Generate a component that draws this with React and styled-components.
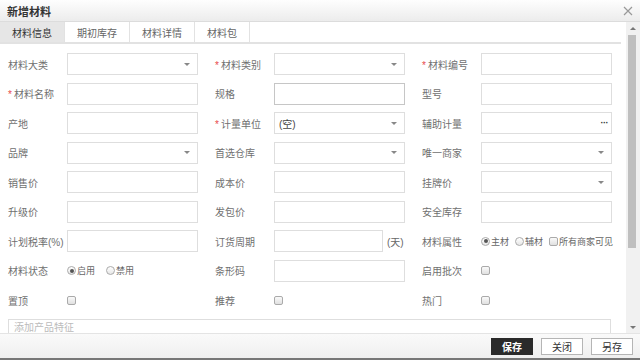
import styled, { createGlobalStyle } from "styled-components";

const GlobalStyle = createGlobalStyle`
    html, body {
        margin:0;
        padding:0;
        background:#fff;
    }
    body {
        font-family:"Liberation Sans","Noto Sans CJK SC",sans-serif;
        font-size:10px;
        color:#555;
    }
`;

const Dialog = styled.div`
    width:640px;
    height:360px;
    display:flex;
    flex-direction:column;
    overflow:hidden;
    background:#fff;
`;
const Header = styled.div`
    height:21px;
    flex:none;
    display:flex;
    align-items:center;
    justify-content:space-between;
    padding:0 7px;
    background:linear-gradient(#fefefe,#ececec);
    border-bottom:1px solid #dcdcdc;
    h1{
        margin:0;
        font-size:11px;
        font-weight:bold;
        color:#333;
    }
`;
const CloseBtn = styled.span`
    width:10px;
    height:10px;
    display:flex;
    color:#999;
`;
const Body = styled.div`
    flex:1;
    display:flex;
    min-height:0;
`;
const Content = styled.div`
    flex:1;
    overflow:hidden;
    padding-right:5px;
`;
const ScrollBar = styled.div`
    width:14px;
    flex:none;
    display:flex;
    flex-direction:column;
    background:#f1f1f1;
`;
const ScrollBtn = styled.div`
    height:12px;
    flex:none;
    display:flex;
    align-items:center;
    justify-content:center;
    &::after{
        content:"";
        border-left:3px solid transparent;
        border-right:3px solid transparent;
        ${p => p.$down ? 'border-top:3px solid #777;' : 'border-bottom:3px solid #777;'}
    }
`;
const Track = styled.div`
    flex:1;
    padding:1px 4px 0 2px;
`;
const Thumb = styled.div`
    height:213px;
    background:#bfbfbf;
`;
const TabBar = styled.div`
    display:flex;
    height:20px;
    border-bottom:2px solid #e2e2e2;
`;
const Tab = styled.div`
    padding:0 12px;
    display:flex;
    align-items:center;
    font-size:10px;
    color:${p => p.$active ? '#333' : '#666'};
    background:${p => p.$active ? '#e6e6e6' : '#fff'};
    border-right:1px solid #e2e2e2;
`;
const Form = styled.div`
    display:grid;
    grid-template-columns:repeat(3,190px);
    column-gap:17px;
    row-gap:7.5px;
    grid-auto-rows:22px;
    padding:9px 0 0 8px;
`;
const Field = styled.div`
    display:grid;
    grid-template-columns:59px 1fr;
    align-items:center;
`;
const Label = styled.label`
    font-size:10px;
    color:#707070;
    white-space:nowrap;
    i{
        color:#e84a4a;
        font-style:normal;
        margin-right:2px;
    }
`;
const Input = styled.div`
    height:22px;
    box-sizing:border-box;
    width:${p => p.$w || '100%'};
    border:1px solid ${p => p.$dark ? '#c6c6c6' : '#dedede'};
    background:#fff;
    display:flex;
    align-items:center;
    padding:0 4px;
    font-size:10px;
    color:#444;
`;
const Arrow = styled.span`
    margin-left:auto;
    margin-right:3px;
    width:0;
    height:0;
    border-left:3px solid transparent;
    border-right:3px solid transparent;
    border-top:3px solid #888;
`;
const Dots = styled.span`
    margin-left:auto;
    margin-right:-1px;
    font-size:9px;
    font-weight:bold;
    color:#333;
    letter-spacing:-0.5px;
    line-height:1;
`;
const Inline = styled.div`
    display:flex;
    align-items:center;
    gap:${p => p.$gap || 4}px;
`;
const Unit = styled.span`
    color:#666;
    font-size:10px;
`;
const Choice = styled.span`
    display:flex;
    align-items:center;
    font-size:9px;
    color:#666;
    white-space:nowrap;
`;
const Radio = styled.span`
    width:7px;
    height:7px;
    border:1px solid #aaa;
    border-radius:50%;
    background:linear-gradient(#fff,#e6e6e6);
    margin-right:1px;
    display:flex;
    align-items:center;
    justify-content:center;
    &::after{
        content:"";
        width:4px;
        height:4px;
        border-radius:50%;
        background:${p => p.$on ? '#555' : 'transparent'};
    }
`;
const Check = styled.span`
    width:7px;
    height:7px;
    border:1px solid #aaa;
    border-radius:2px;
    background:linear-gradient(#fafafa,#e0e0e0);
    margin-right:1px;
`;
const Features = styled.div`
    margin:8px 0 24px 8px;
    width:603px;
    height:96px;
    box-sizing:border-box;
    border:1px solid #dedede;
    padding:2px 5px;
    font-size:10px;
    line-height:12px;
    color:#bbb;
`;
const Footer = styled.div`
    height:24px;
    flex:none;
    display:flex;
    align-items:center;
    justify-content:flex-end;
    gap:8px;
    padding:0 7px 0 0;
    border-top:1px solid #e4e4e4;
    border-bottom:2px solid #777;
    background:linear-gradient(#fafafa,#efefef);
`;
const Button = styled.button`
    width:42px;
    height:17px;
    padding:0;
    font-family:inherit;
    font-size:10px;
    font-weight:${p => p.$primary ? 'bold' : 'normal'};
    color:${p => p.$primary ? '#fff' : '#333'};
    background:${p => p.$primary ? '#2a2a2a' : '#fff'};
    border:1px solid ${p => p.$primary ? '#2a2a2a' : '#b5b5b5'};
    cursor:pointer;
`;

function Row({ label, required, children }) {
    return (
        <Field>
            <Label>{required && <i>*</i>}{label}</Label>
            {children}
        </Field>
    );
}

const Select = ({ children }) => <Input>{children}<Arrow /></Input>;

export default function App() {
    return (
        <Dialog>
            <GlobalStyle />
            <Header>
                <h1>新增材料</h1>
                <CloseBtn>
                    <svg width="10" height="10" viewBox="0 0 10 10">
                        <path d="M1 1 L9 9 M9 1 L1 9" stroke="currentColor" strokeWidth="1.2" />
                    </svg>
                </CloseBtn>
            </Header>
            <Body>
                <Content>
                    <TabBar>
                        <Tab $active>材料信息</Tab>
                        <Tab>期初库存</Tab>
                        <Tab>材料详情</Tab>
                        <Tab>材料包</Tab>
                    </TabBar>
                    <Form>
                        <Row label="材料大类"><Select /></Row>
                        <Row label="材料类别" required><Select /></Row>
                        <Row label="材料编号" required><Input /></Row>

                        <Row label="材料名称" required><Input /></Row>
                        <Row label="规格"><Input $dark /></Row>
                        <Row label="型号"><Input /></Row>

                        <Row label="产地"><Input /></Row>
                        <Row label="计量单位" required><Select>(空)</Select></Row>
                        <Row label="辅助计量"><Input><Dots>···</Dots></Input></Row>

                        <Row label="品牌"><Select /></Row>
                        <Row label="首选仓库"><Select /></Row>
                        <Row label="唯一商家"><Select /></Row>

                        <Row label="销售价"><Input /></Row>
                        <Row label="成本价"><Input /></Row>
                        <Row label="挂牌价"><Select /></Row>

                        <Row label="升级价"><Input /></Row>
                        <Row label="发包价"><Input /></Row>
                        <Row label="安全库存"><Input /></Row>

                        <Row label="计划税率(%)"><Input /></Row>
                        <Row label="订货周期">
                            <Inline><Input $w="109px" /><Unit>(天)</Unit></Inline>
                        </Row>
                        <Row label="材料属性">
                            <Inline $gap={6}>
                                <Choice><Radio $on />主材</Choice>
                                <Choice><Radio />辅材</Choice>
                                <Choice><Check />所有商家可见</Choice>
                            </Inline>
                        </Row>

                        <Row label="材料状态">
                            <Inline $gap={11}>
                                <Choice><Radio $on />启用</Choice>
                                <Choice><Radio />禁用</Choice>
                            </Inline>
                        </Row>
                        <Row label="条形码"><Input /></Row>
                        <Row label="启用批次"><Inline><Check /></Inline></Row>

                        <Row label="置顶"><Inline><Check /></Inline></Row>
                        <Row label="推荐"><Inline><Check /></Inline></Row>
                        <Row label="热门"><Inline><Check /></Inline></Row>
                    </Form>
                    <Features>添加产品特征</Features>
                </Content>
                <ScrollBar>
                    <ScrollBtn />
                    <Track><Thumb /></Track>
                    <ScrollBtn $down />
                </ScrollBar>
            </Body>
            <Footer>
                <Button $primary>保存</Button>
                <Button>关闭</Button>
                <Button>另存</Button>
            </Footer>
        </Dialog>
    );
}
